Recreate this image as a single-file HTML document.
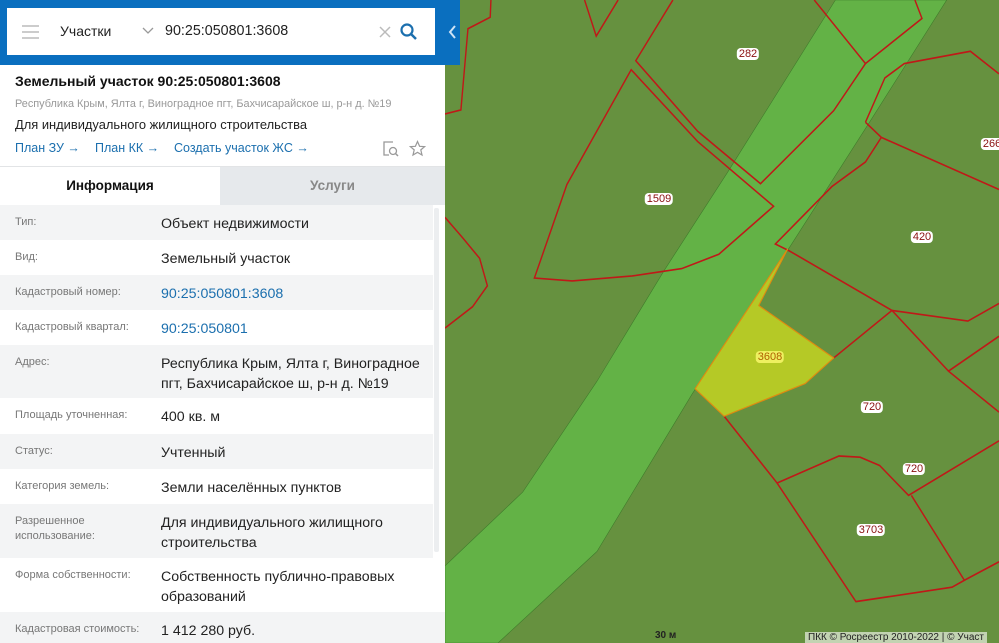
<!DOCTYPE html>
<html><head><meta charset="utf-8"><style>
*{margin:0;padding:0;box-sizing:border-box}
body{width:999px;height:643px;overflow:hidden;position:relative;font-family:"Liberation Sans","DejaVu Sans",sans-serif;background:#66913f}
#map{position:absolute;left:445px;top:0;width:554px;height:643px}
.lbl{position:absolute;font-size:11px;color:#8b1010;background:#fff;border-radius:4px;padding:0 2px;line-height:12px;transform:translate(-50%,-50%)}
#panel{position:absolute;left:0;top:0;width:445px;height:643px;background:#fff}
.hdr{position:absolute;left:0;top:0;width:445px;height:65px;background:#0a6fbf}
.tab{position:absolute;left:445px;top:0;width:15px;height:65px;background:#0a6fbf}
.sb{position:absolute;left:7px;top:8px;width:428px;height:47px;background:#fff}
.row{position:absolute;left:0;width:433px;font-size:14.2px;color:#222}
.row .k{position:absolute;left:15px;top:10px;font-size:11px;color:#777;width:130px;line-height:15px}
.row .v{position:absolute;left:161px;top:9px;line-height:20px;width:272px}
.g{background:#f3f4f5}
a{color:#1b6fae;text-decoration:none}
.lk{position:absolute;top:141px;font-size:12.5px;color:#1b6fae;white-space:nowrap}
</style></head><body>
<svg id="map" viewBox="0 0 1568 1568" preserveAspectRatio="none">
<rect width="1568" height="1568" fill="#66913f"/>
<polygon points="1105,0 1420,0 1200,300 970,610 700,960 430,1345 150,1568 0,1568 0,1380 220,1200 430,930 620,660 800,420" fill="#63b246" stroke="#3d7a2a" stroke-width="1.5"/>
<g fill="none" stroke="#c01818" stroke-width="4">
<polyline points="130,0 128,42 65,70 45,268 0,278"/>
<polyline points="395,0 428,88 490,0"/>
<polyline points="645,0 540,148 715,320 893,448 1100,270 1190,155 1350,45 1330,0"/>
<polyline points="1045,0 1190,155"/>
<polygon points="527,170 345,450 253,678 360,685 530,673 670,655 775,620 930,503 715,345"/>
<polyline points="0,530 50,580 98,630 120,697 78,748 0,800"/>
<polyline points="1190,298 1245,190 1300,155 1487,125 1568,180"/>
<polyline points="1190,298 1235,335 1568,462"/>
<polyline points="1235,335 1190,395 1095,455 935,595 975,612 1265,757 1480,783 1568,740"/>
<polyline points="1100,873 1265,757 1425,905 1568,1005"/>
<polyline points="1425,905 1568,820"/>
<polyline points="790,1015 940,1178 1115,1112 1175,1115 1230,1135 1312,1208 1568,1075"/>
<polyline points="940,1178 1163,1467 1435,1432 1470,1415 1320,1208"/>
<polyline points="1470,1415 1568,1370"/>
</g>
<polygon points="970,607 888,745 1100,873 1020,935 790,1015 708,948" fill="#b5c926" stroke="#e08a10" stroke-width="3"/>
</svg>
<div class="lbl" style="left:748px;top:54px">282</div>
<div class="lbl" style="left:659px;top:199px">1509</div>
<div class="lbl" style="left:992px;top:144px">266</div>
<div class="lbl" style="left:922px;top:237px">420</div>
<div class="lbl" style="left:770px;top:357px;background:#eef060;color:#b06000">3608</div>
<div class="lbl" style="left:872px;top:407px">720</div>
<div class="lbl" style="left:914px;top:469px">720</div>
<div class="lbl" style="left:871px;top:530px">3703</div>
<div style="position:absolute;left:655px;top:630px;font-size:10px;font-weight:bold;color:#222">30 м</div>
<div style="position:absolute;left:805px;top:632px;font-size:10px;color:#222;background:rgba(255,255,255,.6);padding:0 3px;white-space:nowrap">ПКК © Росреестр 2010-2022 | © Участ</div>

<div id="panel">
<div class="hdr"></div>
<div class="tab"><svg width="15" height="65"><path d="M10 26 L5 32 L10 38" stroke="#cfe3f5" stroke-width="2" fill="none"/></svg></div>
<div class="sb">
<svg style="position:absolute;left:15px;top:17px" width="18" height="14"><path d="M0 1H17M0 7H17M0 13H17" stroke="#ccc" stroke-width="2"/></svg>
<div style="position:absolute;left:53px;top:15px;font-size:14px;color:#222">Участки</div>
<svg style="position:absolute;left:135px;top:19px" width="12" height="8"><path d="M1 1L6 6L11 1" stroke="#999" stroke-width="1.3" fill="none"/></svg>
<div style="position:absolute;left:158px;top:15px;font-size:14.3px;color:#222">90:25:050801:3608</div>
<svg style="position:absolute;left:372px;top:18px" width="12" height="12"><path d="M1 1L11 11M11 1L1 11" stroke="#bbb" stroke-width="1.5"/></svg>
<svg style="position:absolute;left:393px;top:15px" width="18" height="18"><circle cx="7" cy="7" r="5.5" stroke="#1b6fae" stroke-width="2.2" fill="none"/><path d="M11 11L16 16" stroke="#1b6fae" stroke-width="2.5"/></svg>
</div>
<div style="position:absolute;left:15px;top:73px;font-size:14px;font-weight:bold;color:#111">Земельный участок 90:25:050801:3608</div>
<div style="position:absolute;left:15px;top:98px;font-size:10.9px;color:#999">Республика Крым, Ялта г, Виноградное пгт, Бахчисарайское ш, р-н д. №19</div>
<div style="position:absolute;left:15px;top:117px;font-size:12.9px;color:#222">Для индивидуального жилищного строительства</div>
<div class="lk" style="left:15px">План ЗУ →</div>
<div class="lk" style="left:95px">План КК →</div>
<div class="lk" style="left:174px">Создать участок ЖС →</div>
<svg style="position:absolute;left:382px;top:140px" width="18" height="18"><path d="M11 2H2V15H7" stroke="#999" stroke-width="1.3" fill="none"/><circle cx="11" cy="11" r="3.5" stroke="#999" stroke-width="1.3" fill="none"/><path d="M13.5 13.5L16 16" stroke="#999" stroke-width="1.5"/></svg>
<svg style="position:absolute;left:409px;top:140px" width="17" height="17"><path d="M8.5 1.5L10.6 6.3L15.7 6.6L11.8 9.9L13 15L8.5 12.3L4 15L5.2 9.9L1.3 6.6L6.4 6.3Z" stroke="#999" stroke-width="1.2" fill="none"/></svg>
<div style="position:absolute;left:0;top:166px;width:445px;height:1px;background:#e2e4e6"></div>
<div style="position:absolute;left:0;top:167px;width:220px;height:38px;background:#fff;font-size:13.5px;font-weight:bold;text-align:center;line-height:38px;color:#111">Информация</div>
<div style="position:absolute;left:220px;top:167px;width:225px;height:38px;background:#e6e9ec;font-size:13.5px;font-weight:bold;text-align:center;line-height:38px;color:#888">Услуги</div>
<div class="row g" style="top:205px;height:35px"><div class="k">Тип:</div><div class="v">Объект недвижимости</div></div>
<div class="row" style="top:240px;height:35px"><div class="k">Вид:</div><div class="v">Земельный участок</div></div>
<div class="row g" style="top:275px;height:35px"><div class="k">Кадастровый номер:</div><div class="v"><a>90:25:050801:3608</a></div></div>
<div class="row" style="top:310px;height:35px"><div class="k">Кадастровый квартал:</div><div class="v"><a>90:25:050801</a></div></div>
<div class="row g" style="top:345px;height:53px"><div class="k">Адрес:</div><div class="v">Республика Крым, Ялта г, Виноградное<br>пгт, Бахчисарайское ш, р-н д. №19</div></div>
<div class="row" style="top:398px;height:36px"><div class="k">Площадь уточненная:</div><div class="v">400 кв. м</div></div>
<div class="row g" style="top:434px;height:35px"><div class="k">Статус:</div><div class="v">Учтенный</div></div>
<div class="row" style="top:469px;height:35px"><div class="k">Категория земель:</div><div class="v">Земли населённых пунктов</div></div>
<div class="row g" style="top:504px;height:54px"><div class="k">Разрешенное использование:</div><div class="v">Для индивидуального жилищного<br>строительства</div></div>
<div class="row" style="top:558px;height:54px"><div class="k">Форма собственности:</div><div class="v">Собственность публично-правовых<br>образований</div></div>
<div class="row g" style="top:612px;height:31px;width:445px"><div class="k">Кадастровая стоимость:</div><div class="v">1 412 280 руб.</div></div>
<div style="position:absolute;left:433px;top:205px;width:12px;height:407px;background:#fff"></div>
<div style="position:absolute;left:434px;top:208px;width:5px;height:344px;background:#eceef0;border-radius:2px"></div>
</div>
</body></html>
